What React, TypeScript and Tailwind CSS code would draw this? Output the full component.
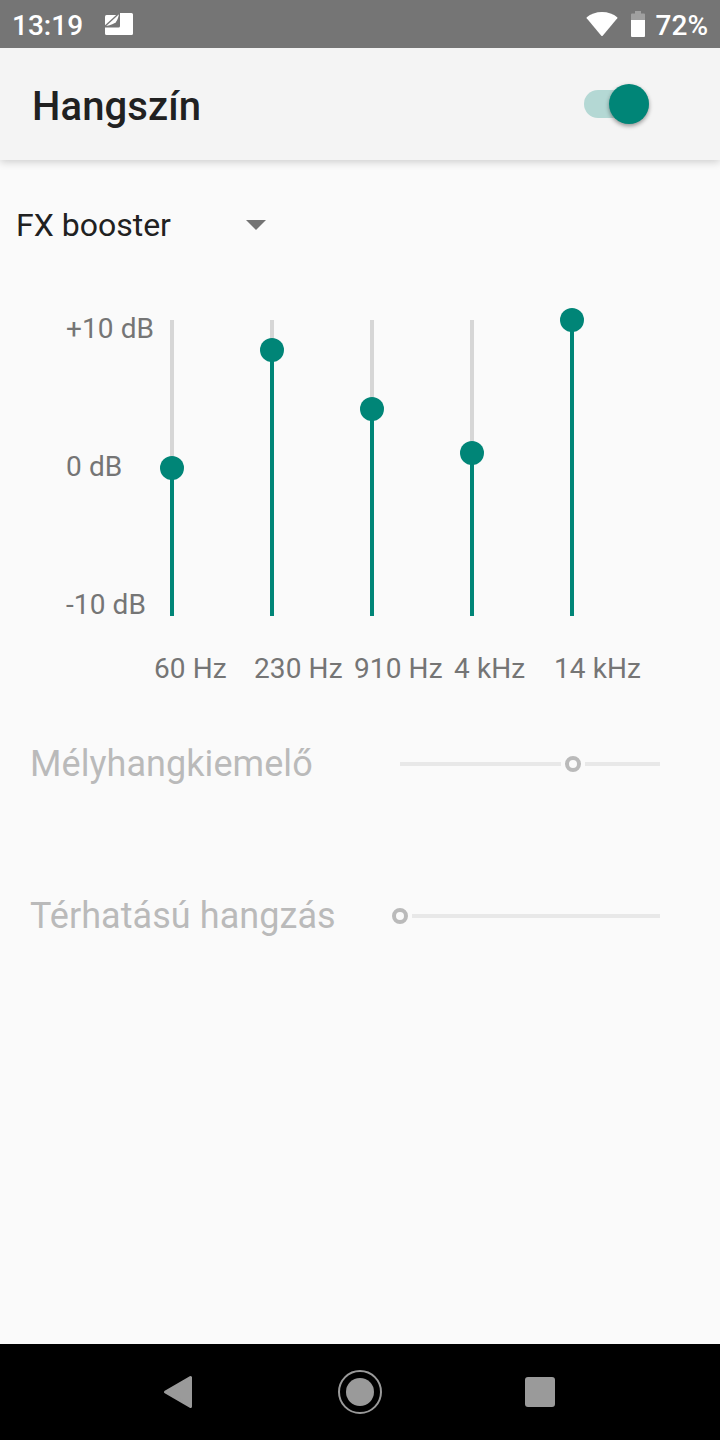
import { useState } from "react";

const scale = ["+10 dB", "0 dB", "-10 dB"];

// top is the distance of the thumb from +10 dB, in px
const bands = [
  { label: "60 Hz", top: 148 },
  { label: "230 Hz", top: 30 },
  { label: "910 Hz", top: 89 },
  { label: "4 kHz", top: 133 },
  { label: "14 kHz", top: 0 },
];

const effects = [
  { label: "Mélyhangkiemelő", value: 173 },
  { label: "Térhatású hangzás", value: 0 },
];

function StatusBar() {
  return (
    <div className="z-10 flex h-12 items-center bg-[#757575] pl-3 pr-3 text-[28px] font-medium leading-8 text-white">
      <span className="w-[93px] pt-1">13:19</span>
      <svg width="28" height="22" viewBox="0 0 28 22" fill="#fff">
        <path d="M15 0H26.500Q28 0 28 1.500V20.500Q28 22 26.500 22H1.500Q0 22 0 20.500V14.500H13.500Q15 14.500 15 13Z" />
        <path d="M1.500 2H11.200L0 12.200V3.500Q0 2 1.500 2Z" />
        <path d="M1.200 13L14 1.300Q12.800 7 10.800 9.200Q8.500 11.500 1.200 13Z" />
      </svg>
      <div className="ml-auto flex items-center">
        <svg width="32" height="26" viewBox="0 0 32 26" fill="#fff">
          <path d="M16 1C10 1 4.500 3 .8 6.200Q.3 6.700 .7 7.200L15.300 24.700Q16 25.400 16.700 24.700L31.300 7.200Q31.700 6.700 31.200 6.200C27.500 3 22 1 16 1Z" />
        </svg>
        <svg className="ml-[13px]" width="14" height="26" viewBox="0 0 14 26">
          <path d="M4 0H10V2.500H13Q14 2.500 14 3.500V9H0V3.500Q0 2.500 1 2.500H4Z" fill="#a0a0a0" />
          <path d="M0 9H14V25Q14 26 13 26H1Q0 26 0 25Z" fill="#fff" />
        </svg>
        <span className="ml-[11px] pt-1">72%</span>
      </div>
    </div>
  );
}

function NavBar() {
  return (
    <div className="flex h-24 items-center justify-between bg-black px-[163px]">
      <svg width="34" height="34" viewBox="0 0 34 34">
        <path d="M2.500 17L27.500 2.500V31.500Z" fill="#9a9a9a" stroke="#9a9a9a" strokeWidth="3" strokeLinejoin="round" />
      </svg>
      <div className="flex size-11 items-center justify-center rounded-full border-2 border-[#9a9a9a]">
        <div className="size-7 rounded-full bg-[#9a9a9a]" />
      </div>
      <div className="flex size-[34px] items-center justify-center">
        <div className="size-[30px] rounded-[3px] bg-[#9a9a9a]" />
      </div>
    </div>
  );
}

export default function App() {
  const [enabled, setEnabled] = useState(true);

  return (
    <div className="flex h-[1440px] w-[720px] flex-col overflow-hidden bg-[#fafafa] font-[Roboto,sans-serif]">
      <StatusBar />

      <header className="flex h-28 items-center justify-between bg-[#f4f4f4] pl-8 pr-[71px] shadow-[0_2px_8px_rgba(0,0,0,0.18)]">
        <h1 className="pt-1.5 text-[40px] font-medium leading-[48px] tracking-[0.1px] text-[#212121]">Hangszín</h1>
        <button
          role="switch"
          aria-checked={enabled}
          onClick={() => setEnabled(!enabled)}
          className="flex h-7 w-[65px] items-center justify-end rounded-full bg-[#b4d8d4]"
        >
          <span className="size-10 shrink-0 rounded-full bg-[#008577] shadow-[0_2px_4px_rgba(0,0,0,0.4)]" />
        </button>
      </header>

      <main className="flex-1">
        <div className="flex h-[130px] w-[266px] items-center justify-between pl-4">
          <span className="text-[32px] leading-10 text-[#212121]">FX booster</span>
          <svg width="20" height="10" viewBox="0 0 20 10">
            <path d="M0 0H20L10 10Z" fill="#737373" />
          </svg>
        </div>

        <section className="mt-[23px] flex pl-[66px] text-[28px] leading-8 tracking-[0.1px] text-[#757575]">
          <div className="flex h-[308px] w-[88px] flex-col justify-between whitespace-nowrap">
            {scale.map((label) => (
              <span key={label}>{label}</span>
            ))}
          </div>
          <div className="flex pt-[7px]">
            {bands.map((band) => (
              <div key={band.label} className="w-[100px]">
                <div className="relative ml-4 h-[296px] w-1 bg-[#d6d6d6]">
                  <div className="absolute bottom-0 w-1 bg-[#008577]" style={{ top: band.top }} />
                  <div className="absolute -left-2.5 -mt-3 size-6 rounded-full bg-[#008577]" style={{ top: band.top }} />
                </div>
                <span className="mt-[37px] block whitespace-nowrap">{band.label}</span>
              </div>
            ))}
          </div>
        </section>

        <section className="mt-[3px]">
          {effects.map((effect) => (
            <div key={effect.label} className="flex h-[152px] items-center justify-between pl-[30px] pr-[60px]">
              <span className="text-[36px] leading-[44px] tracking-[0.06px] text-[#bababa]">{effect.label}</span>
              <div className="relative h-1 w-[260px] bg-[#e8e8e8]">
                <div
                  className="absolute -top-2.5 -ml-3 flex size-6 items-center justify-center bg-[#fafafa]"
                  style={{ left: effect.value }}
                >
                  <div className="size-4 rounded-full border-4 border-[#bababa]" />
                </div>
              </div>
            </div>
          ))}
        </section>
      </main>

      <NavBar />
    </div>
  );
}
